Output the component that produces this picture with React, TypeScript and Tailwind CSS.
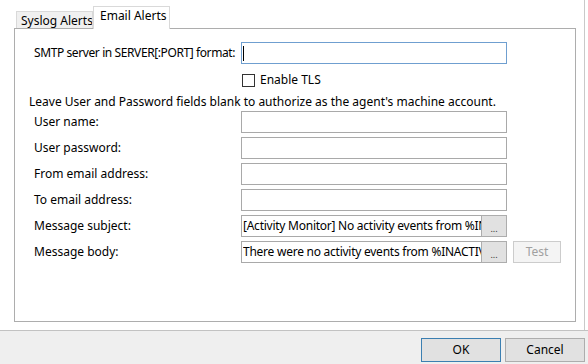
const font = { fontFamily: '"Noto Sans", "Open Sans", sans-serif' };

function TextBox({ focused }: { focused?: boolean }) {
  return (
    <div
      className={`w-[266px] h-[22px] border ${focused ? "border-[#6f9fd0]" : "border-[#a9a9a9]"} bg-white flex items-center pl-[1px]`}
    >
      {focused && <span className="w-px h-[15px] bg-black" />}
    </div>
  );
}

function EllipsisBox({ value }: { value: string }) {
  return (
    <div className="flex h-[22px]">
      <div className="w-[240px] h-[22px] border border-r-0 border-[#a9a9a9] bg-white flex items-center pl-[1px] overflow-hidden">
        <span className="block w-[238px] overflow-hidden whitespace-nowrap text-[12px] leading-[20px] tracking-[-0.25px] text-black">{value}</span>
      </div>
      <div className="w-[26px] h-[22px] border border-[#adadad] bg-[#e1e1e1] flex items-end justify-center pb-[3px] text-[9px] leading-none text-[#333]">
        ...
      </div>
    </div>
  );
}

function Row({ label, tight, children }: { label: string; tight?: boolean; children: React.ReactNode }) {
  return (
    <div className="flex items-center h-[22px]">
      <div className={`w-[212px] pl-[5px] text-[12px] text-black whitespace-nowrap ${tight ? "tracking-[-0.4px]" : ""}`}>{label}</div>
      {children}
    </div>
  );
}

export default function App() {
  return (
    <div className="w-[588px] h-[364px] bg-white flex flex-col overflow-hidden" style={font}>
      {/* Tab area */}
      <div className="h-[330px] w-[585px] border-r border-[#c9c9c9] pl-[14px] pt-[6px]">
        <div className="flex items-end h-[22px] pl-[2px]">
          <div className="w-[77px] h-[17px] bg-[#f0f0f0] border border-b-0 border-[#d9d9d9] text-[12px] leading-[17px] pl-[4px] text-black whitespace-nowrap overflow-hidden">
            Syslog Alerts
          </div>
          <div className="relative z-10 -mb-px w-[77px] h-[23px] bg-white border border-b-0 border-[#d9d9d9] text-[12px] leading-[18px] pl-[6px] text-black whitespace-nowrap overflow-hidden">
            Email Alerts
          </div>
        </div>
        <div className="w-[562px] h-[294px] border border-[#adadad] pt-[13px] pl-[14px]">
          <div className="flex flex-col">
            <Row label="SMTP server in SERVER[:PORT] format:" tight>
              <TextBox focused />
            </Row>
            <div className="flex items-center h-[14px] mt-[9px] pl-[213px] gap-[5px]">
              <div className="w-[13px] h-[13px] border border-[#333] bg-white" />
              <span className="text-[12px] text-black">Enable TLS</span>
            </div>
            <div className="mt-[7px] h-[16px] text-[12px] leading-[16px] text-black whitespace-nowrap">
              Leave User and Password fields blank to authorize as the agent's machine account.
            </div>
            <div className="flex flex-col gap-[4px] mt-[1px]">
              <Row label="User name:">
                <TextBox />
              </Row>
              <Row label="User password:">
                <TextBox />
              </Row>
              <Row label="From email address:">
                <TextBox />
              </Row>
              <Row label="To email address:">
                <TextBox />
              </Row>
              <Row label="Message subject:">
                <EllipsisBox value="[Activity Monitor] No activity events from %IN" />
              </Row>
              <Row label="Message body:">
                <EllipsisBox value="There were no activity events from %INACTIV" />
                <div className="ml-[6px] w-[48px] h-[22px] border border-[#cccccc] bg-[#f4f4f4] flex items-center justify-center text-[12px] text-[#a0a0a0]">
                  Test
                </div>
              </Row>
            </div>
          </div>
        </div>
      </div>
      {/* Button bar */}
      <div className="flex-1 border-t border-[#c2c2c2] bg-[#efefef] flex justify-end items-start pt-[7px] pr-[3px] gap-[4px]">
        <button className="w-[80px] h-[24px] border border-[#3c7fb1] bg-[#e1e1e1] text-[12px] text-black">OK</button>
        <button className="w-[80px] h-[24px] border border-[#adadad] bg-[#e1e1e1] text-[12px] text-black">Cancel</button>
      </div>
    </div>
  );
}
